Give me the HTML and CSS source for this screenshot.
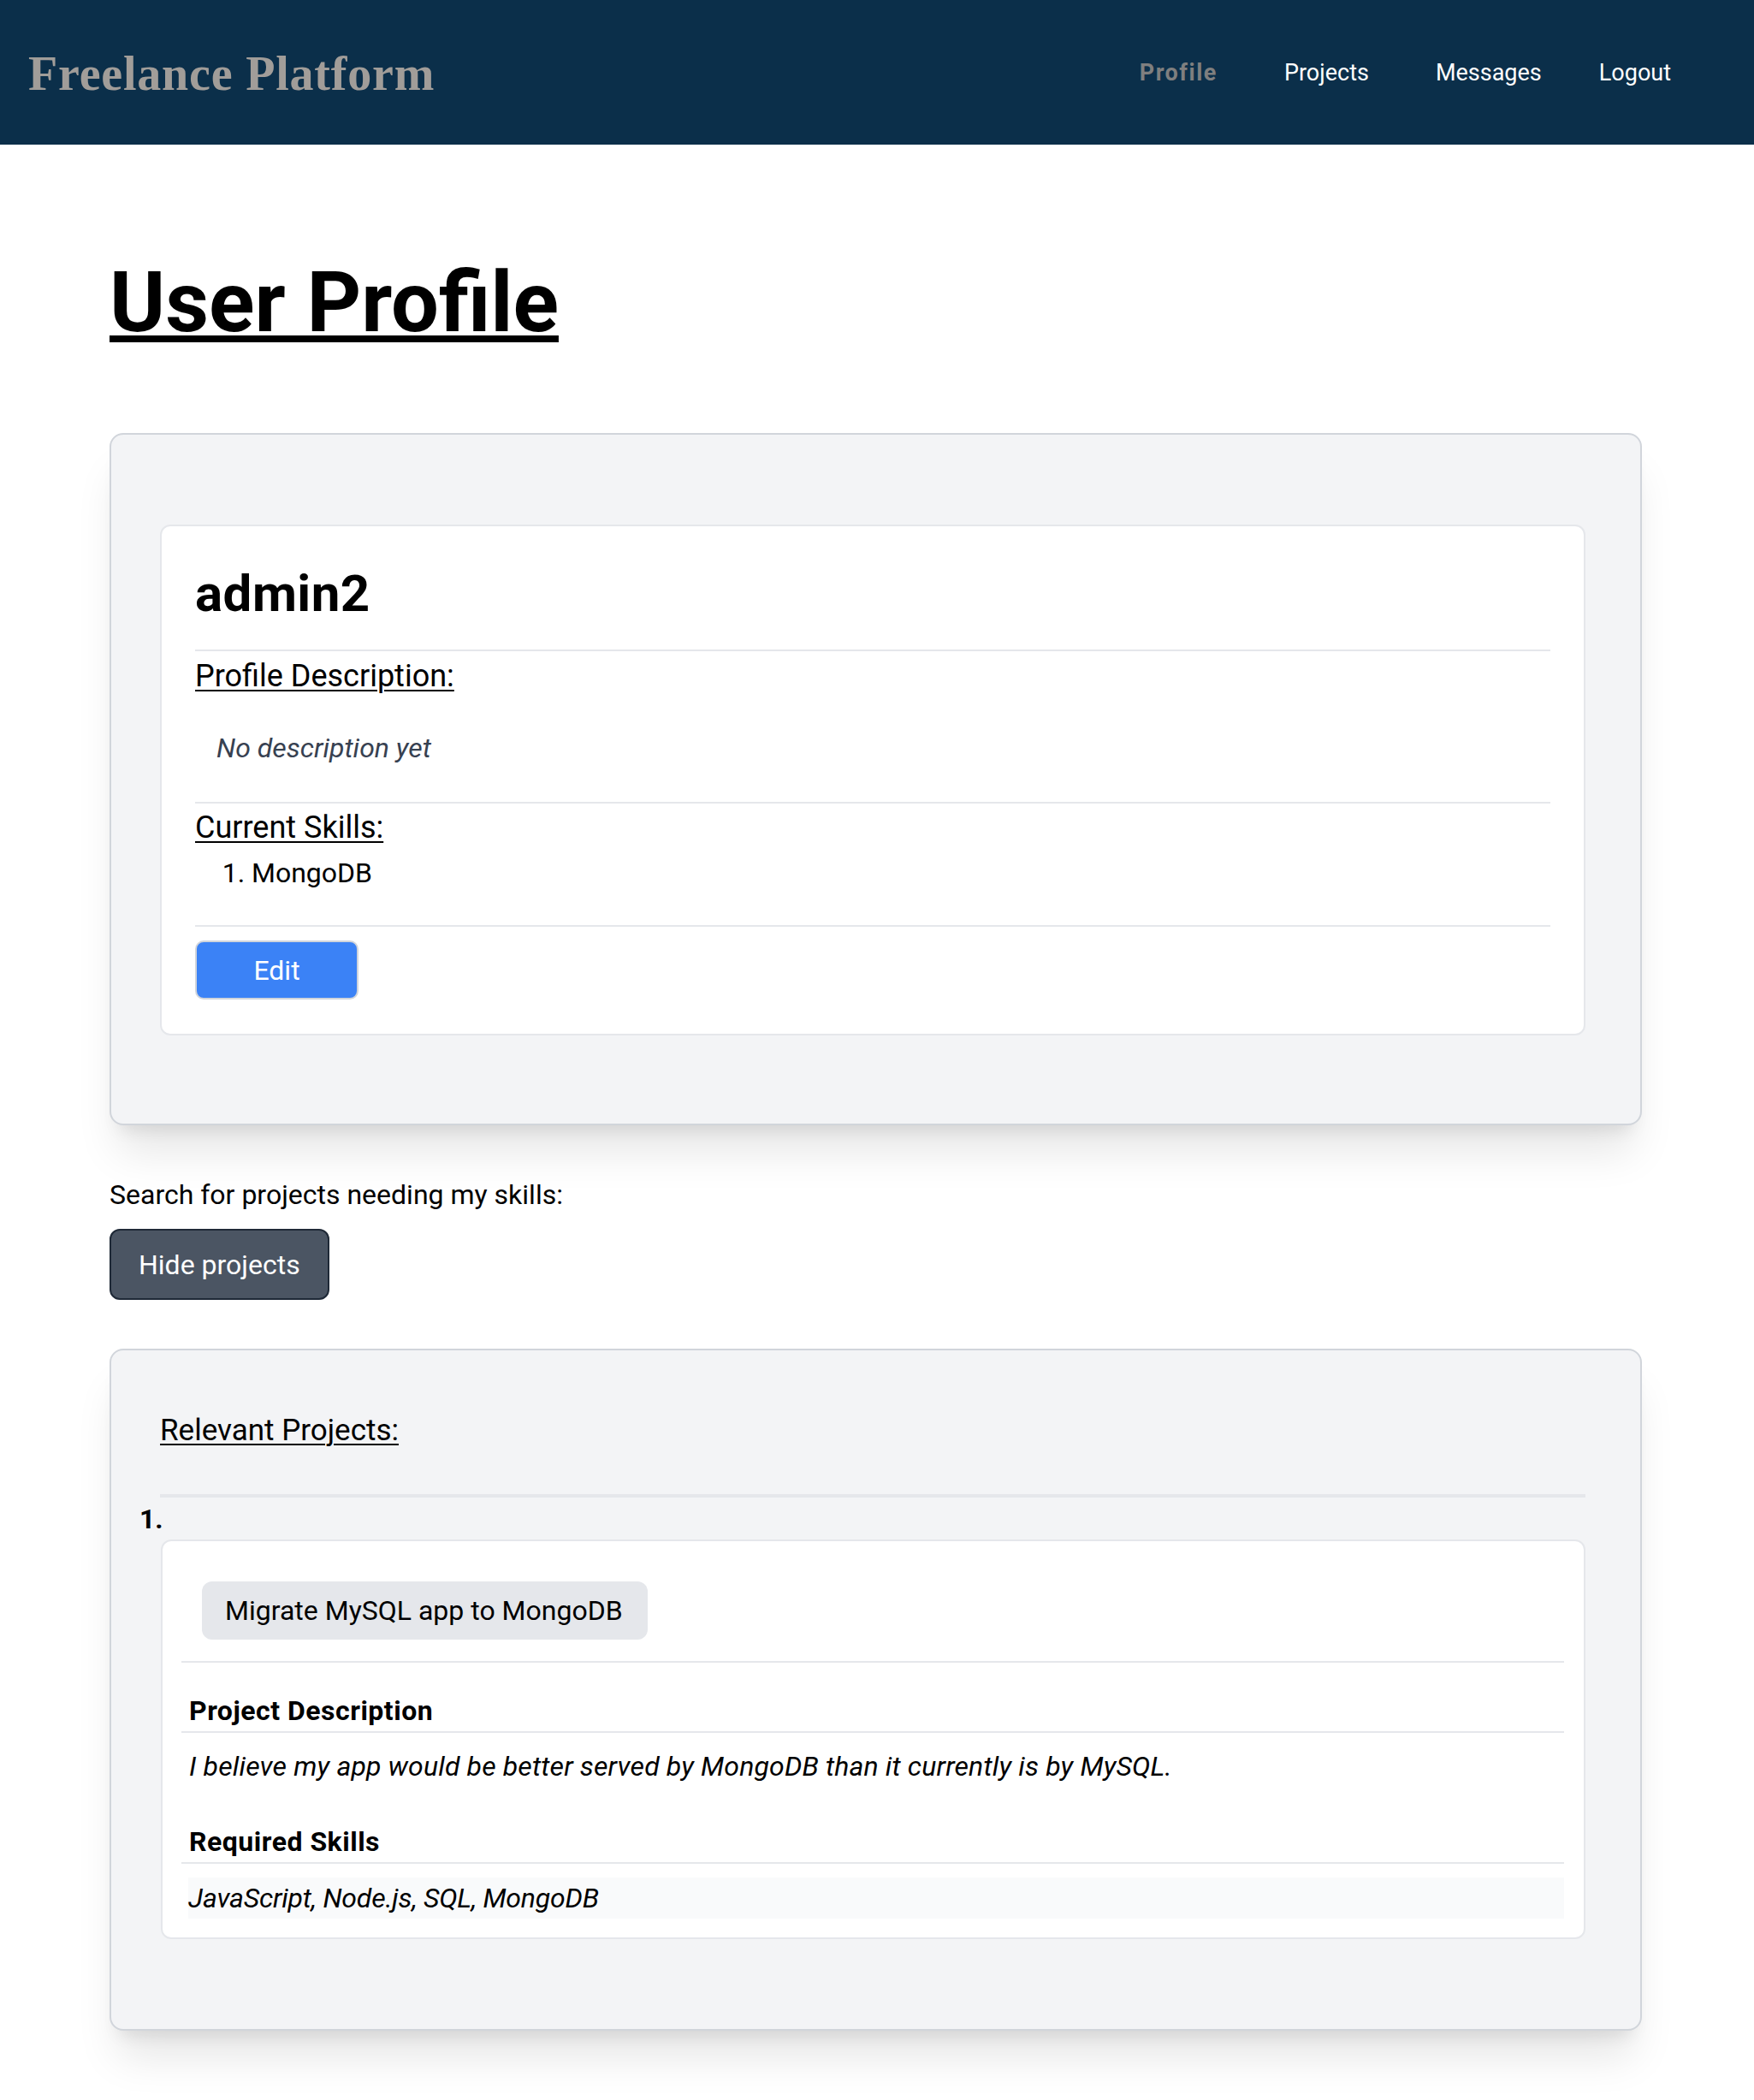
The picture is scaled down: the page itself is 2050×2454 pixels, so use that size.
FILE: index.html
```html
<!DOCTYPE html>
<html lang="en">
<head>
<meta charset="utf-8">
<title>Freelance Platform - User Profile</title>
<link rel="stylesheet" href="styles.css">
</head>
<body>
<header class="topbar">
  <div class="logo">Freelance Platform</div>
  <nav class="nav">
    <a class="nav-link active" href="#">Profile</a>
    <a class="nav-link" href="#">Projects</a>
    <a class="nav-link" href="#">Messages</a>
    <a class="nav-link logout" href="#">Logout</a>
  </nav>
</header>

<main class="page">
  <h1 class="page-title">User Profile</h1>

  <section class="panel profile-panel">
    <div class="card profile-card">
      <h2 class="username">admin2</h2>
      <hr class="rule">
      <h3 class="label">Profile Description:</h3>
      <p class="no-desc">No description yet</p>
      <hr class="rule rule-gap">
      <h3 class="label label-skills">Current Skills:</h3>
      <ol class="skills">
        <li>MongoDB</li>
      </ol>
      <hr class="rule rule-gap rule-last">
      <button class="btn btn-edit">Edit</button>
    </div>
  </section>

  <p class="search-text">Search for projects needing my skills:</p>
  <button class="btn btn-hide">Hide projects</button>

  <section class="panel projects-panel">
    <h3 class="label relevant">Relevant Projects:</h3>
    <hr class="rule-thick">
    <ol class="project-list">
      <li class="project-item">
        <div class="item-num">1.</div>
        <div class="card project-card">
          <div class="project-head">
            <span class="chip">Migrate MySQL app to MongoDB</span>
          </div>
          <hr class="rule">
          <h4 class="sub-heading first">Project Description</h4>
          <p class="project-desc">I believe my app would be better served by MongoDB than it currently is by MySQL.</p>
          <h4 class="sub-heading">Required Skills</h4>
          <p class="project-skills">JavaScript, Node.js, SQL, MongoDB</p>
        </div>
      </li>
    </ol>
  </section>
</main>
</body>
</html>
```

FILE: styles.css
```css
* { box-sizing: border-box; }

html, body {
  margin: 0;
  padding: 0;
  background: #ffffff;
}

body {
  font-family: Roboto, "Noto Sans", "Liberation Sans", sans-serif;
  font-size: 32px;
  line-height: 48px;
  color: #000;
}

/* Header */
.topbar {
  height: 169px;
  background: #0b2f4a;
  display: flex;
  align-items: center;
  justify-content: space-between;
  padding: 0 97px 0 33px;
}

.logo {
  font-family: "Liberation Serif", "DejaVu Serif", serif;
  font-weight: bold;
  font-size: 56px;
  line-height: 56px;
  letter-spacing: 0.8px;
  color: #a19d99;
  margin-top: 2px;
}

.nav {
  display: flex;
  align-items: center;
  gap: 78px;
}

.nav-link {
  font-size: 27px;
  line-height: 28px;
  color: #ffffff;
  text-decoration: none;
}

.nav-link.active {
  color: #7f7f7f;
  font-weight: bold;
  letter-spacing: 1.5px;
}

.nav-link.logout {
  margin-left: -11px;
}

/* Page */
.page {
  padding: 0 131px 80px 128px;
}

.page-title {
  margin: 127px 0 95px;
  font-size: 99px;
  line-height: 115px;
  font-weight: bold;
  text-decoration: underline;
  text-decoration-thickness: 8px;
  text-underline-offset: 5px;
}

.panel {
  background: #f3f4f6;
  border: 2px solid #d1d5db;
  border-radius: 16px;
  box-shadow: 0 40px 50px -10px rgba(0, 0, 0, 0.1), 0 16px 20px -12px rgba(0, 0, 0, 0.1);
}

.profile-panel {
  padding: 105px 64px 103px 57px;
}

.card {
  background: #ffffff;
  border: 2px solid #e5e7eb;
  border-radius: 12px;
}

.profile-card {
  padding: 45px 39px 40px 39px;
}

.username {
  margin: 0;
  font-size: 60px;
  line-height: 67px;
  font-weight: bold;
  letter-spacing: 0.5px;
}

.rule {
  border: 0;
  border-top: 2px solid #e5e7eb;
  margin: 32px 0 0;
}

.rule-gap {
  margin-top: 39px;
}

.rule-last {
  margin-top: 37px;
}

.label {
  margin: 7px 0 0;
  font-size: 36px;
  line-height: 45px;
  font-weight: normal;
  text-decoration: underline;
  text-decoration-thickness: 2px;
  text-underline-offset: 4px;
}

.label-skills {
  margin-top: 6px;
}

.no-desc {
  margin: 37px 0 0 25px;
  font-style: italic;
  color: #374151;
}

.skills {
  margin: 6px 0 0;
  padding-left: 66px;
}

.btn {
  font-family: inherit;
  font-size: 32px;
  line-height: 48px;
  color: #ffffff;
  cursor: pointer;
  display: block;
}

.btn-edit {
  margin-top: 16px;
  width: 191px;
  height: 69px;
  background: #3b82f6;
  border: 2px solid #d1d5db;
  border-radius: 10px;
}

.search-text {
  margin: 57px 0 0;
}

.btn-hide {
  margin-top: 16px;
  height: 83px;
  padding: 0 32px;
  background: #4b5563;
  border: 2px solid #1f2937;
  border-radius: 12px;
}

.projects-panel {
  margin-top: 57px;
  padding: 71px 64px 105px 57px;
}

.relevant {
  margin: 0;
  font-size: 35px;
}

.rule-thick {
  border: 0;
  border-top: 4px solid #e5e7eb;
  margin: 52px 0 0;
}

.project-list {
  list-style: none;
  margin: 0;
  padding: 0;
}

.item-num {
  margin: 1px 0 0 -24px;
  font-weight: bold;
}

.project-card {
  margin-left: 1px;
  padding: 0 23px 22px 22px;
}

.project-head {
  padding: 47px 24px 0;
}

.chip {
  display: inline-block;
  height: 68px;
  line-height: 68px;
  padding: 0 29px 0 27px;
  background: #e5e7eb;
  border-radius: 12px;
}

.project-card .rule {
  margin-top: 25px;
}

.sub-heading {
  margin: 40px 0 0;
  padding-left: 9px;
  font-size: 32px;
  line-height: 48px;
  font-weight: bold;
  letter-spacing: 0.5px;
  border-bottom: 2px solid #e5e7eb;
}

.sub-heading.first {
  margin-top: 32px;
}

.project-desc {
  margin: 15px 0 0 9px;
  font-style: italic;
  letter-spacing: 0.15px;
}

.project-skills {
  margin: 16px 0 0 8px;
  background: #f9fafb;
  font-style: italic;
  letter-spacing: -0.2px;
}
```
